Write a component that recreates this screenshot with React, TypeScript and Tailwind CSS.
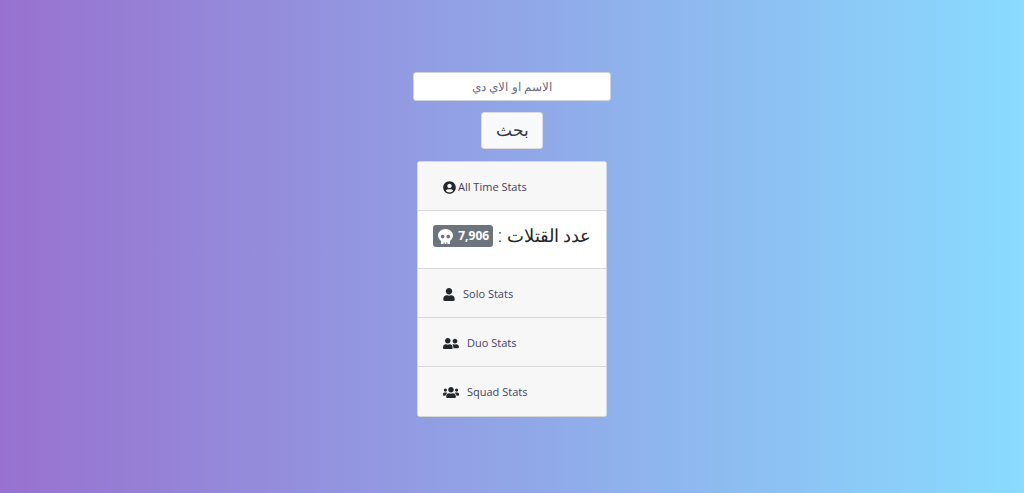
import { FaUserCircle, FaSkull, FaUser, FaUserFriends, FaUsers } from "react-icons/fa";

function Row({ icon, label, gap }: { icon: React.ReactNode; label: string; gap: string }) {
  return (
    <div className={`flex h-[49px] items-center bg-[#f7f7f7] pl-[25px] pt-[2px] text-[11px] text-[#3d4263] ${gap}`}>
      <span className="text-[#23272b]">{icon}</span>
      <span>{label}</span>
    </div>
  );
}

export default function App() {
  return (
    <div className="flex h-[493px] w-full flex-col items-center bg-[linear-gradient(to_right,#9871cf,#89dbff)] pt-[72px] font-['Open_Sans','DejaVu_Sans',sans-serif]">
      <input
        dir="rtl"
        placeholder="الاسم او الاي دي"
        className="h-[29px] w-[198px] rounded-[3px] border border-[#ced4da] bg-white text-center text-[12px] font-light placeholder:text-[#6c6c80]"
      />
      <button className="mt-[11px] h-[37px] w-[62px] rounded-[3px] border border-[#dcdcdc] bg-[#f8f9fa] pb-[2px] text-[17px] font-light text-[#343a40]">
        بحث
      </button>
      <div className="mt-[12px] flex w-[190px] flex-col divide-y divide-[#d9d9d9] rounded-[3px] border border-[#d6d6d6] bg-white">
        <Row icon={<FaUserCircle className="h-[13px] w-[13px]" />} label="All Time Stats" gap="gap-[2px]" />
        <div className="flex h-[58px] items-center justify-center gap-[5px] bg-white pb-[8px] text-[#212529]" dir="rtl">
          <span className="text-[18px] font-light">عدد القتلات :</span>
          <span className="flex h-[22px] w-[60px] items-center justify-center gap-[5px] rounded-[3px] bg-[#6c757d] pl-[2px] pt-[1px] text-[12px] font-bold text-white" dir="ltr">
            <FaSkull className="h-[15px] w-[15px]" />
            7,906
          </span>
        </div>
        <Row icon={<FaUser className="h-[13px] w-[12px]" />} label="Solo Stats" gap="gap-[8px]" />
        <Row icon={<FaUserFriends className="h-[13px] w-[16px]" />} label="Duo Stats" gap="gap-[8px]" />
        <Row icon={<FaUsers className="h-[13px] w-[16px]" />} label="Squad Stats" gap="gap-[8px]" />
      </div>
    </div>
  );
}
